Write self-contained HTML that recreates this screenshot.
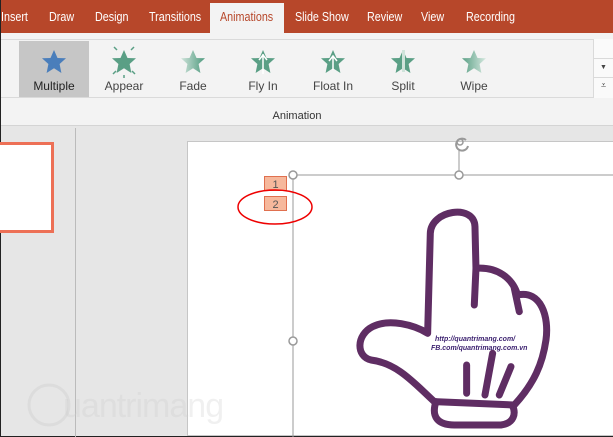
<!DOCTYPE html><html><head><style>
*{margin:0;padding:0;box-sizing:border-box}
body{width:613px;height:437px;overflow:hidden;position:relative;background:#e6e6e6;font-family:"Liberation Sans",sans-serif;border-left:1px solid #222;border-bottom:1px solid #222}
.a{position:absolute}
.tab{position:absolute;top:10px;color:#fff;font-size:12.5px;transform:scaleX(0.86);transform-origin:left}
.lab{position:absolute;top:79px;font-size:12px;color:#444;width:70px;text-align:center}
</style></head><body>
<div class="a" style="left:0;top:0;width:613px;height:33px;background:#b7472a"></div>
<div class="a" style="left:209px;top:3px;width:74px;height:31px;background:#f3f3f3"></div>
<div class="tab" style="left:0">Insert</div>
<div class="tab" style="left:48px">Draw</div>
<div class="tab" style="left:94px">Design</div>
<div class="tab" style="left:148px">Transitions</div>
<div class="tab" style="left:219px;color:#b7472a">Animations</div>
<div class="tab" style="left:294px">Slide Show</div>
<div class="tab" style="left:366px">Review</div>
<div class="tab" style="left:420px">View</div>
<div class="tab" style="left:465px">Recording</div>
<div class="a" style="left:0;top:33px;width:613px;height:93px;background:#f3f3f3;border-bottom:1px solid #d4d4d4"></div>
<div class="a" style="left:0;top:39px;width:613px;height:59px;border-top:1px solid #dadada;border-bottom:1px solid #dadada"></div>
<div class="a" style="left:18px;top:41px;width:70px;height:56px;background:#c6c6c6"></div>
<div class="a" style="left:592px;top:39px;width:21px;height:59px;border-left:1px solid #dadada;background:#fafafa"></div>
<div class="a" style="left:592px;top:58px;width:21px;height:20px;border-top:1px solid #dadada;border-bottom:1px solid #dadada;font-size:7px;text-align:center;line-height:18px;color:#444">▼</div>
<div class="a" style="left:592px;top:80px;width:21px;text-align:center;font-size:9px;color:#444">⩡</div>
<svg class="a" style="left:0;top:40px" width="592" height="40">
<defs><linearGradient id="f" x1="0" x2="1"><stop offset="0" stop-color="#cfe3da"/><stop offset="1" stop-color="#4e9a7e"/></linearGradient>
<linearGradient id="w" x1="0" x2="1"><stop offset="0" stop-color="#5a9f85"/><stop offset="1" stop-color="#d5e8df"/></linearGradient>
<polygon id="s" points="0,-12 3.5,-4 12,-3.7 5.6,2 7.4,11 0,6.3 -7.4,11 -5.6,2 -12,-3.7 -3.5,-4"/></defs>
<use href="#s" x="53" y="22" fill="#4a7ebb"/>
<use href="#s" x="123" y="22" fill="#5a9f85"/>
<g stroke="#5a9f85" stroke-width="1.5"><line x1="113" y1="7" x2="116" y2="10"/><line x1="133" y1="7" x2="130" y2="10"/><line x1="112" y1="34" x2="115" y2="31"/><line x1="134" y1="34" x2="131" y2="31"/><line x1="123" y1="35" x2="123" y2="38"/></g>
<use href="#s" x="192" y="22" fill="url(#f)"/>
<use href="#s" x="262" y="22" fill="#5a9f85"/><path d="M262 14v20M258 20l4-5 4 5" stroke="#fff" stroke-width="1.5" fill="none"/>
<use href="#s" x="332" y="22" fill="#5a9f85"/><path d="M332 16v14M328 21l4-5 4 5" stroke="#fff" stroke-width="1.5" fill="none"/>
<use href="#s" x="402" y="22" fill="#5a9f85"/><rect x="401" y="10" width="3" height="22" fill="#cfe3da"/>
<use href="#s" x="473" y="22" fill="url(#w)"/>
</svg>
<div class="lab" style="left:18px;color:#222">Multiple</div>
<div class="lab" style="left:88px">Appear</div>
<div class="lab" style="left:157px">Fade</div>
<div class="lab" style="left:227px">Fly In</div>
<div class="lab" style="left:297px">Float In</div>
<div class="lab" style="left:367px">Split</div>
<div class="lab" style="left:438px">Wipe</div>
<div class="a" style="left:0;top:110px;width:592px;text-align:center;font-size:11px;color:#333">Animation</div>
<div class="a" style="left:-4px;top:142px;width:57px;height:91px;background:#fff;border:3px solid #ed7056"></div>
<div class="a" style="left:74px;top:128px;width:1px;height:309px;background:#bbb"></div>
<div class="a" style="left:186px;top:141px;width:427px;height:295px;background:#fff;border:1px solid #c6c6c6"></div>
<svg class="a" style="left:0;top:0" width="613" height="437">
<g fill="none" stroke="rgba(200,200,200,.3)" stroke-width="3"><circle cx="48" cy="405" r="20"/></g>
<text x="62" y="417" font-size="34" fill="rgba(205,205,205,.3)" letter-spacing="-1">uantrimang</text>
<g fill="none" stroke="#999" stroke-width="1"><line x1="292" y1="175" x2="613" y2="175"/><line x1="292" y1="175" x2="292" y2="437"/><line x1="458" y1="150" x2="458" y2="175"/></g>
<g fill="#fff" stroke="#999" stroke-width="1.5"><circle cx="292" cy="175" r="4"/><circle cx="458" cy="175" r="4"/><circle cx="292" cy="341" r="4"/></g>
<path d="M465 140a6 6 0 1 0 2 6" fill="none" stroke="#999" stroke-width="2"/><circle cx="459" cy="142" r="3" fill="none" stroke="#999" stroke-width="1.5"/>
<rect x="263.5" y="176.5" width="22" height="14" fill="#f6b89c" stroke="#e0704f"/>
<rect x="263.5" y="196.5" width="22" height="14" fill="#f6b89c" stroke="#e0704f"/>
<text x="274.5" y="188" font-size="11" text-anchor="middle" fill="#555">1</text>
<text x="274.5" y="208" font-size="11" text-anchor="middle" fill="#555">2</text>
<ellipse cx="274" cy="207" rx="37" ry="17" fill="none" stroke="#e00" stroke-width="1.5"/>
<g transform="translate(180,130) scale(0.3333)" fill="none" stroke="#5f2d63" stroke-width="21" stroke-linecap="round" stroke-linejoin="round">
<path d="M740,610 L748,310 C750,240 880,220 882,290 L885,415 C950,410 995,445 1010,495 C1080,480 1105,560 1095,630 C1085,700 1060,760 1000,825 L760,815 C700,760 650,700 570,690 C525,680 525,615 575,590 C625,565 700,585 740,610"/>
<path d="M885,415 L880,525 M1000,475 L1015,545 M857,705 L857,790 M935,670 L912,795 M990,710 L955,795"/>
<path d="M765,815 C750,860 770,885 820,885 L960,885 C1000,880 1005,850 995,828"/>
</g>
<text x="434" y="341" font-size="7" font-weight="bold" font-style="italic" fill="#3a1f6e">http://quantrimang.com/</text>
<text x="430" y="350" font-size="7" font-weight="bold" font-style="italic" fill="#3a1f6e">FB.com/quantrimang.com.vn</text>
</svg>
</body></html>
